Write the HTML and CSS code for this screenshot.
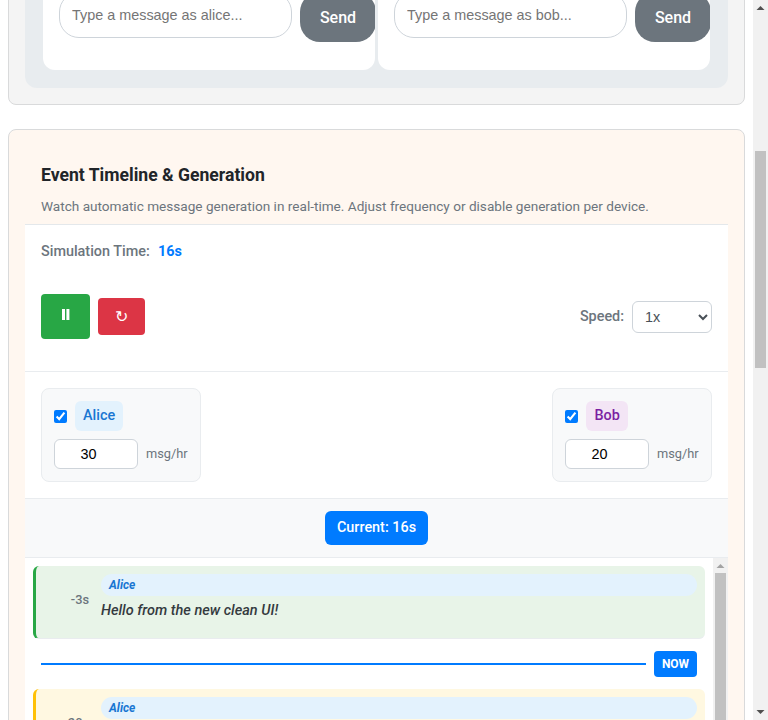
FILE: index.html
```html
<!DOCTYPE html>
<html lang="en">
<head>
<meta charset="utf-8">
<title>Event Timeline</title>
<link rel="stylesheet" href="styles.css">
</head>
<body>
<div class="window">
  <main class="page">
    <section class="card chat-card">
      <div class="devices">
        <div class="device">
          <input class="message-input" type="text" placeholder="Type a message as alice...">
          <button class="send">Send</button>
        </div>
        <div class="device">
          <input class="message-input" type="text" placeholder="Type a message as bob...">
          <button class="send">Send</button>
        </div>
      </div>
    </section>
    <section class="card timeline-card">
      <header class="heading">
        <h2>Event Timeline &amp; Generation</h2>
        <p>Watch automatic message generation in real-time. Adjust frequency or disable generation per device.</p>
      </header>
      <div class="controls">
        <div class="sim-time">Simulation Time: <strong>16s</strong></div>
        <div class="control-row">
          <div class="buttons">
            <button class="btn pause" aria-label="Pause"><svg width="8" height="11" viewBox="0 0 8 11"><path d="M0 0h3v11H0zM4.4 0h3v11h-3z" fill="#fff"/></svg></button>
            <button class="btn reset">↻</button>
          </div>
          <label class="speed">Speed:
            <select><option>1x</option></select>
          </label>
        </div>
      </div>
      <div class="frequencies">
        <div class="frequency">
          <div class="who"><input type="checkbox" checked><span class="name alice">Alice</span></div>
          <div class="rate"><input type="number" value="30"><span>msg/hr</span></div>
        </div>
        <div class="frequency">
          <div class="who"><input type="checkbox" checked><span class="name bob">Bob</span></div>
          <div class="rate"><input type="number" value="20"><span>msg/hr</span></div>
        </div>
      </div>
      <div class="current"><span>Current: 16s</span></div>
      <div class="timeline">
        <div class="events">
          <article class="event past">
            <time>-3s</time>
            <div class="event-body"><div class="tag">Alice</div><p>Hello from the new clean UI!</p></div>
          </article>
          <div class="now"><i></i><span>NOW</span></div>
          <article class="event future">
            <time>20s</time>
            <div class="event-body"><div class="tag">Alice</div></div>
          </article>
        </div>
        <div class="scrollbar inner-scroll">
          <svg width="15" height="15"><path d="M3.5 10h8l-4-4z" fill="#a3a3a3"/></svg>
          <div class="thumb"></div>
        </div>
      </div>
    </section>
  </main>
  <div class="scrollbar page-scroll">
    <svg width="15" height="15"><path d="M3.5 10h8l-4-4z" fill="#505050"/></svg>
    <div class="thumb"></div>
    <svg class="down" width="15" height="15"><path d="M3.5 5h8l-4 4z" fill="#505050"/></svg>
  </div>
</div>
</body>
</html>
```
FILE: styles.css
```css
* { box-sizing: border-box; }
body { margin: 0; overflow: hidden; background: #fff; color: #212529; font: 14.4px/1.5 Roboto, sans-serif; }
h2, p { margin: 0; }
button, input, select { margin: 0; }
.window { display: grid; grid-template-columns: 1fr 15px; height: 720px; overflow: hidden; }
.page { padding: 0 8px; height: 720px; overflow: hidden; }
.card { border: 1px solid #d9dadb; border-radius: 8px; padding: 0 16px; }
.chat-card { margin-top: -30px; height: 135px; padding-bottom: 16px; background: #f4f4f4; }
.devices { display: flex; gap: 3px; height: 117px; padding: 0 18px 18px; background: #e8ecef; border-radius: 12px; }
.device { flex: 0 0 332px; display: flex; align-items: flex-start; gap: 8px; padding: 21px 0 0 16px; background: #fff; border-radius: 12px; overflow: hidden; }
.message-input { flex: 0 0 233px; height: 46px; padding: 0 12px; border: 1px solid #ced4da; border-radius: 20px; font: 14.4px "Liberation Sans", sans-serif; }
.send { flex: 0 0 76px; height: 50px; padding: 0; border: 0; border-radius: 20px; background: #6c757d; color: #fff; font: 500 16px Roboto, sans-serif; }
.timeline-card { margin-top: 24px; height: 900px; background: #fff7f0; }
.heading { height: 94px; padding: 32px 16px 0; }
h2 { font-size: 17.6px; line-height: 26px; font-weight: 700; }
.heading p { margin-top: 8px; font-size: 13.6px; line-height: 20px; color: #6c757d; white-space: nowrap; }
.controls { height: 147px; padding: 16px 16px 0; background: #fff; border-top: 1px solid #e4e8eb; }
.sim-time { line-height: 22px; font-weight: 500; color: #6c757d; }
.sim-time strong { margin-left: 4.6px; font-weight: 700; color: #007bff; }
.control-row { display: flex; align-items: center; justify-content: space-between; height: 45px; margin-top: 31px; }
.buttons { display: flex; align-items: center; gap: 8px; }
.btn { display: flex; align-items: center; justify-content: center; padding: 0; border: 0; border-radius: 4px; color: #fff; font: 16px Roboto, sans-serif; }
.pause { width: 49px; height: 45px; padding: 0 0 4px 0; background: #28a745; }
.reset { width: 47px; height: 37px; padding-right: 1px; background: #dc3545; }
.speed { display: flex; align-items: center; gap: 8px; font-weight: 500; color: #6c757d; }
.speed select { width: 80px; height: 32px; padding: 0 8px; border: 1px solid #ced4da; border-radius: 6px; background: #fff; color: #495057; font: 14.4px "Liberation Sans", sans-serif; }
.frequencies { display: flex; justify-content: space-between; height: 127px; padding: 16px; background: #fff; border-top: 1px solid #e9ecef; }
.frequency { width: 160px; height: 94px; padding: 12px; border: 1px solid #e9ecef; border-radius: 8px; background: #f8f9fa; }
.who, .rate { display: flex; align-items: center; gap: 8px; }
.who input { width: 13px; height: 13px; accent-color: #007bff; }
.name { height: 30px; padding: 0 8px; border-radius: 6px; line-height: 29px; font-weight: 500; }
.alice { background: #e3f2fd; color: #1976d2; }
.bob { width: 42px; padding-left: 8.4px; background: #f3e5f5; color: #7b1fa2; }
.rate { margin-top: 8px; font-size: 12.8px; color: #6c757d; }
.rate input { width: 84px; height: 30px; padding: 0; border: 1px solid #ced4da; border-radius: 6px; background: #fff; text-align: center; font: 14.4px "Liberation Sans", sans-serif; }
.current { display: flex; justify-content: center; height: 60px; padding-top: 12px; background: #f8f9fa; border: solid #e9ecef; border-width: 1px 0; }
.current span { height: 34px; padding: 0 12px; border-radius: 6px; background: #007bff; color: #fff; line-height: 33px; font-weight: 500; }
.timeline { display: grid; grid-template-columns: 1fr 15px; height: 400px; background: #fff; }
.events { padding: 8px; }
.event { display: flex; height: 73px; padding: 8px 8px 0 0; border-left: 3px solid #28a745; border-bottom: 1px solid #e9ecef; border-radius: 6px; background: #e8f4e8; }
.event time { flex: 0 0 53px; margin-right: 12px; padding-top: 16px; text-align: right; font-size: 12.8px; line-height: 20px; font-weight: 500; color: #6c757d; }
.event-body { flex: 1; font-style: italic; }
.tag { height: 22px; padding: 0 8px; border-radius: 12px; background: #e3f2fd; color: #1976d2; font-size: 12px; line-height: 22px; font-weight: 700; }
.event p { margin-top: 5px; line-height: 20px; font-size: 14.5px; font-weight: 500; color: #343a40; }
.future { border-left-color: #ffc107; background: #fff8e1; }
.now { display: flex; align-items: center; gap: 8px; height: 26px; margin: 12px 8px; }
.now i { flex: 1; height: 2px; background: #007bff; }
.now span { width: 43px; height: 26px; border-radius: 4px; background: #007bff; color: #fff; text-align: center; font-size: 12px; line-height: 26px; font-weight: 700; }
.scrollbar { display: flex; flex-direction: column; background: #f1f1f1; }
.scrollbar svg { display: block; flex: none; }
.thumb { margin: 0 2px; background: #c1c1c1; }
.inner-scroll .thumb { height: 300px; }
.page-scroll .thumb { margin-top: 136px; height: 217px; }
.down { margin-top: auto; }
```
